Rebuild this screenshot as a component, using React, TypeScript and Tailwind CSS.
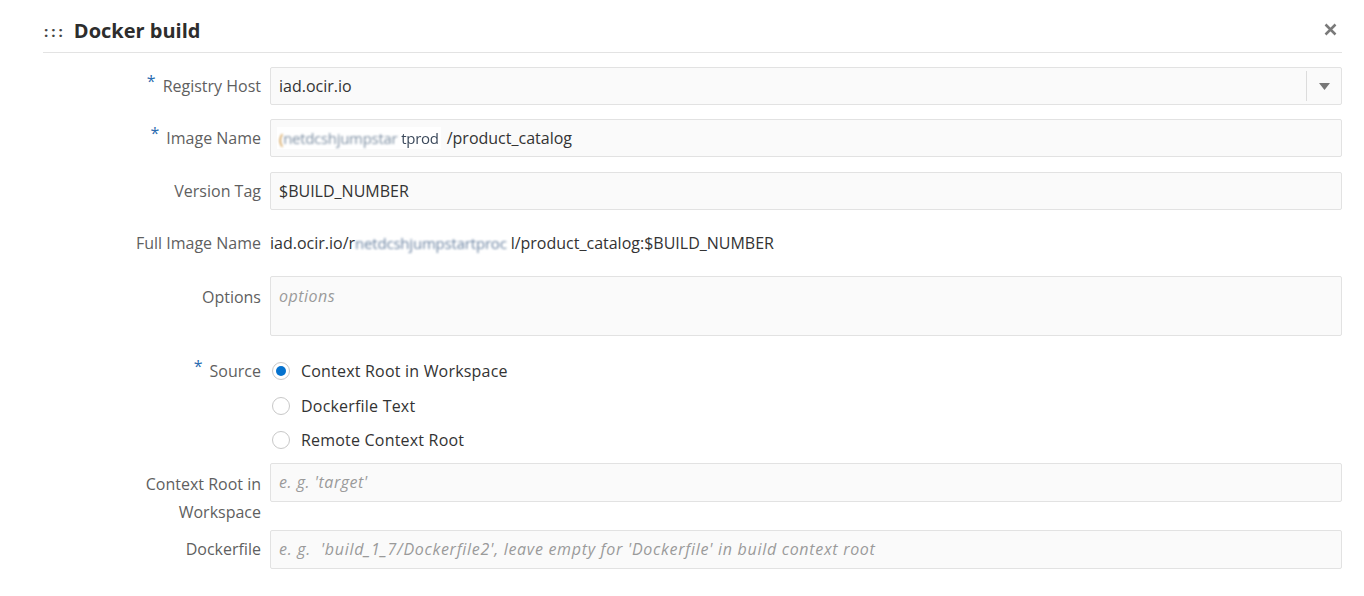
import React, { useState } from "react";

const FONT = { fontFamily: '"Open Sans", "Noto Sans", Arial, sans-serif' };

// Label shown right-aligned in the left column, with optional required mark
const Label = ({ text, required }: { text: string; required?: boolean }) => (
  <div className="w-[227px] shrink-0 pr-[9px] text-right text-[16px] leading-[28px] text-[#5f5f5f]">
    {required && (
      <span className="relative -top-[5px] mr-[7px] text-[16px] text-[#2b6cb0]">*</span>
    )}
    {text}
  </div>
);

const App = () => {
  const [source, setSource] = useState("context");

  const sources = [
    { id: "context", label: "Context Root in Workspace" },
    { id: "text", label: "Dockerfile Text" },
    { id: "remote", label: "Remote Context Root" },
  ];

  return (
    <div className="min-h-[596px] w-full bg-white pl-[43px] pr-[22px]" style={FONT}>
      {/* Header */}
      <div className="flex items-center justify-between border-b border-[#e3e3e3] pt-[18px] pb-[8px]">
        <div className="flex items-center text-[20px] font-bold leading-[26px] text-[#2d2d2d]">
          <span className="ml-[1px] mr-[8px] text-[15px] tracking-[3px] text-[#444]">:::</span>
          Docker build
        </div>
        <svg width="13" height="13" viewBox="0 0 13 13" className="mr-[5px] -mt-[3px]">
          <path d="M1.5 1.5 L11.5 11.5 M11.5 1.5 L1.5 11.5" stroke="#7a7a7a" strokeWidth="2.5" />
        </svg>
      </div>

      <div className="flex flex-col pt-[14px]">
        {/* Registry Host */}
        <div className="flex items-center">
          <Label text="Registry Host" required />
          <div className="flex h-[38px] flex-1 items-center rounded-[2px] border border-[#e2e2e2] bg-[#fafafa]">
            <span className="flex-1 pl-[8px] text-[16px] text-[#333]">iad.ocir.io</span>
            <div className="h-[30px] w-px bg-[#dcdcdc]" />
            <div className="flex w-[34px] items-center justify-center">
              <svg width="11" height="7" viewBox="0 0 11 7">
                <path d="M0 0 H11 L5.5 7 Z" fill="#777" />
              </svg>
            </div>
          </div>
        </div>

        {/* Image Name */}
        <div className="mt-[14px] flex items-center">
          <Label text="Image Name" required />
          <div className="flex h-[38px] flex-1 items-center rounded-[2px] border border-[#e2e2e2] bg-[#fafafa] pl-[6px] text-[16px] text-[#333]">
            <span className="inline-flex items-center bg-white px-[2px] text-[15px] tracking-[-0.3px]">
              <span className="blur-[1.2px] text-[#7d8fa3]">
                <span className="text-[#c98a2e]">(</span>netdcshjumpstar
              </span>
              <span className="ml-[4px] blur-[0.6px] text-[#3c4a5c]">tprod</span>
            </span>
            <span className="ml-[6px]">/product_catalog</span>
          </div>
        </div>

        {/* Version Tag */}
        <div className="mt-[15px] flex items-center">
          <Label text="Version Tag" />
          <div className="flex h-[38px] flex-1 items-center rounded-[2px] border border-[#e2e2e2] bg-[#fafafa] pl-[8px] text-[16px] text-[#333]">
            $BUILD_NUMBER
          </div>
        </div>

        {/* Full Image Name */}
        <div className="mt-[14px] flex h-[38px] items-center">
          <Label text="Full Image Name" />
          <div className="flex items-center text-[16px] text-[#333]">
            <span>iad.ocir.io/r</span>
            <span className="blur-[1.2px] text-[15px] tracking-[-0.2px] text-[#6d85a3]">netdcshjumpstartproc</span>
            <span className="ml-[4px]">l/product_catalog:$BUILD_NUMBER</span>
          </div>
        </div>

        {/* Options */}
        <div className="mt-[14px] flex items-start">
          <div className="pt-[7px]">
            <Label text="Options" />
          </div>
          <div className="h-[60px] flex-1 rounded-[2px] border border-[#e2e2e2] bg-[#fafafa] pl-[8px] pt-[7px] text-[16px] italic leading-[24px] tracking-[0.5px] text-[#9a9a9a]">
            options
          </div>
        </div>

        {/* Source */}
        <div className="mt-[18px] flex items-start">
          <div className="pt-[3px]">
            <Label text="Source" required />
          </div>
          <div className="flex flex-col">
            {sources.map((s) => (
              <label
                key={s.id}
                className="flex h-[34.5px] cursor-pointer items-center"
                onClick={() => setSource(s.id)}
              >
                <span className="ml-[2px] flex h-[18px] w-[18px] items-center justify-center rounded-full border border-[#c8c8c8] bg-white">
                  {source === s.id && <span className="h-[10px] w-[10px] rounded-full bg-[#0572ce]" />}
                </span>
                <span className="ml-[11px] text-[16px] tracking-[0.2px] text-[#333]">{s.label}</span>
              </label>
            ))}
          </div>
        </div>

        {/* Context Root in Workspace */}
        <div className="mt-[5px] flex items-start">
          <div className="pt-[7px]">
            <div className="w-[227px] shrink-0 pr-[9px] text-right text-[16px] leading-[28px] text-[#5f5f5f]">
              Context Root in
              <br />
              Workspace
            </div>
          </div>
          <div className="flex h-[39px] flex-1 items-center rounded-[2px] border border-[#e2e2e2] bg-[#fafafa] pl-[8px] text-[16px] italic tracking-[0.5px] text-[#9a9a9a]">
            e. g. 'target'
          </div>
        </div>

        {/* Dockerfile */}
        <div className="mt-[4px] flex items-center">
          <Label text="Dockerfile" />
          <div className="flex h-[39px] flex-1 items-center whitespace-pre rounded-[2px] border border-[#e2e2e2] bg-[#fafafa] pl-[8px] text-[16px] italic tracking-[0.7px] text-[#9a9a9a]">
            e. g.  'build_1_7/Dockerfile2', leave empty for 'Dockerfile' in build context root
          </div>
        </div>
      </div>
    </div>
  );
};

export default App;
